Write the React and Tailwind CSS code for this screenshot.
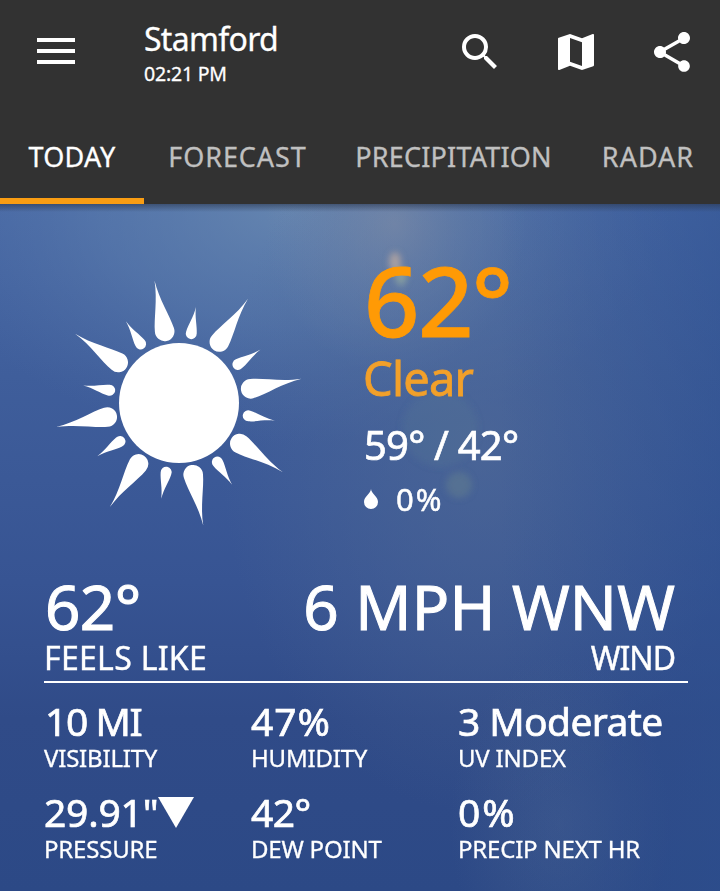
import React, { useState } from 'react';
import { MdSearch, MdMap, MdShare } from 'react-icons/md';

const tabs = [
  { id: 'today', label: 'TODAY', box: 'w-[144px]', text: 'tracking-[0.3px]' },
  { id: 'forecast', label: 'FORECAST', box: 'w-[187px]', text: 'tracking-[0.9px]' },
  { id: 'precipitation', label: 'PRECIPITATION', box: 'w-[245px]', text: 'tracking-[0.2px]' },
  { id: 'radar', label: 'RADAR', box: 'w-[144px]', text: 'tracking-[1px]' },
];

const stats = [
  { label: 'VISIBILITY', value: '10 MI', text: 'tracking-[-1.4px] pl-px' },
  { label: 'HUMIDITY', value: '47%', text: 'tracking-[1px]' },
  { label: 'UV INDEX', value: '3 Moderate', text: 'tracking-[-0.6px]' },
  { label: 'PRESSURE', value: '29.91"', text: 'tracking-[-0.2px]', falling: true },
  { label: 'DEW POINT', value: '42°', text: 'tracking-[-0.6px]' },
  { label: 'PRECIP NEXT HR', value: '0%', text: 'tracking-[2px]' },
];

const longRays = [-11.3, 33.5, 78.8, 123.7, 168.8, 213.6, 258.9, 303.7];
const shortRays = [10, 56.8, 100.5, 147, 190.5, 236.9, 280.4, 327];

const SunIcon = () => (
  <svg className="h-[260px] w-[260px]" viewBox="-130 -130 260 260" fill="white">
    <circle r="60" />
    {longRays.map((angle) => (
      <path
        key={angle}
        transform={`rotate(${angle})`}
        d="M0 -125C0.8 -105 8.2 -88 9.7 -74.500A9.8 9.8 0 1 1 -9.7 -74.500C-8.2 -88 -0.8 -105 0 -125Z"
      />
    ))}
    {shortRays.map((angle) => (
      <path
        key={angle}
        transform={`rotate(${angle})`}
        d="M0 -97.500C0.6 -87 4.6 -79 5.4 -71.500A5.5 5.5 0 1 1 -5.4 -71.500C-4.6 -79 -0.6 -87 0 -97.500Z"
      />
    ))}
  </svg>
);

const MenuIcon = () => (
  <svg className="h-[26px] w-[38px]" viewBox="0 0 38 26" fill="white">
    <rect width="38" height="4" />
    <rect y="11" width="38" height="4" />
    <rect y="22" width="38" height="4" />
  </svg>
);

const DropIcon = () => (
  <svg className="h-5 w-[14px]" viewBox="0 0 14 20" fill="white">
    <path d="M7 0C7.4 5 14 7.500 14 13A7 7 0 0 1 0 13C0 7.500 6.600 5 7 0Z" />
  </svg>
);

// Blurred sky with a faint lens flare
const Sky = () => (
  <svg className="absolute inset-0 h-full w-full" viewBox="0 0 720 687" preserveAspectRatio="none">
    <defs>
      <linearGradient id="base" x1="0" y1="0" x2="0" y2="1">
        <stop offset="0" stopColor="#4768a5" />
        <stop offset="0.25" stopColor="#3f5e9b" />
        <stop offset="0.55" stopColor="#375493" />
        <stop offset="0.75" stopColor="#304b88" />
        <stop offset="1" stopColor="#2c4986" />
      </linearGradient>
      <radialGradient id="haze">
        <stop offset="0" stopColor="#6c8cb2" stopOpacity="0.8" />
        <stop offset="0.5" stopColor="#6384b0" stopOpacity="0.45" />
        <stop offset="1" stopColor="#5674a8" stopOpacity="0" />
      </radialGradient>
      <radialGradient id="glow">
        <stop offset="0" stopColor="#8a94aa" stopOpacity="0.6" />
        <stop offset="0.5" stopColor="#7b8cab" stopOpacity="0.3" />
        <stop offset="1" stopColor="#7488ac" stopOpacity="0" />
      </radialGradient>
      <radialGradient id="beam">
        <stop offset="0" stopColor="#526b96" stopOpacity="0.6" />
        <stop offset="1" stopColor="#526b96" stopOpacity="0" />
      </radialGradient>
      <linearGradient id="edge" x1="0" y1="0" x2="1" y2="0">
        <stop offset="0" stopColor="#2d5090" stopOpacity="0" />
        <stop offset="1" stopColor="#2d5090" stopOpacity="0.5" />
      </linearGradient>
      <filter id="soft" x="-50%" y="-50%" width="200%" height="200%">
        <feGaussianBlur stdDeviation="3" />
      </filter>
      <linearGradient id="shade" x1="0" y1="0" x2="0" y2="1">
        <stop offset="0" stopColor="#2b3850" stopOpacity="0.6" />
        <stop offset="1" stopColor="#2b3850" stopOpacity="0" />
      </linearGradient>
    </defs>
    <rect width="720" height="687" fill="url(#base)" />
    <ellipse cx="290" cy="0" rx="380" ry="240" fill="url(#haze)" />
    <ellipse cx="395" cy="20" rx="130" ry="150" fill="url(#glow)" />
    <ellipse cx="480" cy="240" rx="260" ry="370" fill="url(#beam)" />
    <ellipse cx="560" cy="620" rx="110" ry="170" fill="url(#beam)" opacity="0.6" />
    <rect x="500" width="220" height="687" fill="url(#edge)" />
    <g filter="url(#soft)">
      <ellipse cx="395" cy="58" rx="6" ry="10" fill="#b8a8a0" opacity="0.8" />
      <ellipse cx="401" cy="73" rx="6" ry="9" fill="#9db3a0" opacity="0.6" />
      <circle cx="440" cy="225" r="38" fill="#567896" opacity="0.3" />
      <circle cx="459" cy="281" r="13" fill="#64808f" opacity="0.5" />
    </g>
    <rect width="720" height="8" fill="url(#shade)" />
  </svg>
);

const Stat = ({ stat }) => (
  <div>
    <div className="flex h-11 items-center text-[39px] leading-[44px] whitespace-nowrap">
      <span className={`[-webkit-text-stroke:0.7px] ${stat.text}`}>{stat.value}</span>
      {stat.falling && (
        <svg className="h-[31px] w-9" viewBox="0 0 36 31" fill="white">
          <path d="M0 0H36L18 31Z" />
        </svg>
      )}
    </div>
    <div className="mt-px text-2xl leading-7 tracking-[-0.2px] whitespace-nowrap [-webkit-text-stroke:0.3px]">
      {stat.label}
    </div>
  </div>
);

export default function App() {
  const [activeTab, setActiveTab] = useState('today');

  return (
    <div className="flex h-[891px] w-[720px] flex-col overflow-hidden bg-[#323232] font-['Noto_Sans',sans-serif] text-white">
      {/* Header */}
      <header className="h-[204px] shrink-0">
        <div className="flex h-[110px] items-start pr-6">
          <button className="mt-[38px] ml-[37px]">
            <MenuIcon />
          </button>
          <div className="ml-[69px] flex-1 pt-[21px] [-webkit-text-stroke:0.3px]">
            <h1 className="text-[32px] leading-9 tracking-[-0.7px]">Stamford</h1>
            <p className="mt-[5px] text-[19.5px] leading-6 tracking-[-0.2px]">02:21 PM</p>
          </div>
          <div className="flex gap-12 pt-7">
            <MdSearch size={48} />
            <MdMap size={48} />
            <MdShare size={48} />
          </div>
        </div>
        <nav className="flex h-[94px]">
          {tabs.map((tab) => (
            <button
              key={tab.id}
              onClick={() => setActiveTab(tab.id)}
              className={`flex justify-center border-b-6 pt-[31px] text-[27px] leading-8 [-webkit-text-stroke:0.3px] ${tab.box} ${tab.text} ${
                activeTab === tab.id ? 'border-[#f99d13] text-white' : 'border-transparent text-[#c0c0c0]'
              }`}
            >
              {tab.label}
            </button>
          ))}
        </nav>
      </header>

      {/* Current conditions */}
      <main className="relative flex-1">
        <Sky />
        <div className="relative">
          <section className="flex h-[366px] pl-[49px]">
            <div className="w-[315px] pt-[69px]">
              <SunIcon />
            </div>
            <div className="pt-[46px]">
              <div className="text-[97px] leading-[98px] font-medium tracking-[-1.6px] text-[#ff9a05] [-webkit-text-stroke:0.8px]">
                62°
              </div>
              <div className="mt-0.5 -ml-px text-[47px] leading-[56px] tracking-[-0.8px] text-[#f2a02a] [-webkit-text-stroke:0.8px]">
                Clear
              </div>
              <div className="mt-[15px] text-[40px] leading-[48px] tracking-[-0.8px] [-webkit-text-stroke:0.7px]">
                59° / 42°
              </div>
              <div className="mt-3 flex items-center gap-[18px] text-[31px] leading-9">
                <DropIcon />
                <span className="tracking-[2px] [-webkit-text-stroke:0.5px]">0%</span>
              </div>
            </div>
          </section>

          <section className="mr-8 ml-11 flex justify-between border-b-2 border-white pr-[13px] pb-[5px]">
            <div>
              <div className="pl-px text-[62px] leading-[72px] tracking-[-0.6px] [-webkit-text-stroke:1px]">62°</div>
              <div className="-mt-0.5 text-[32px] leading-9 tracking-[0.3px] [-webkit-text-stroke:0.4px]">FEELS LIKE</div>
            </div>
            <div className="text-right">
              <div className="text-[62px] leading-[72px] tracking-[0.2px] [-webkit-text-stroke:1px]">6 MPH WNW</div>
              <div className="-mt-0.5 text-[32px] leading-9 tracking-[-1px] [-webkit-text-stroke:0.4px]">WIND</div>
            </div>
          </section>

          <section className="ml-11 grid grid-cols-[207px_207px_1fr] gap-y-[18px] pt-4">
            {stats.map((stat) => (
              <Stat key={stat.label} stat={stat} />
            ))}
          </section>
        </div>
      </main>
    </div>
  );
}
